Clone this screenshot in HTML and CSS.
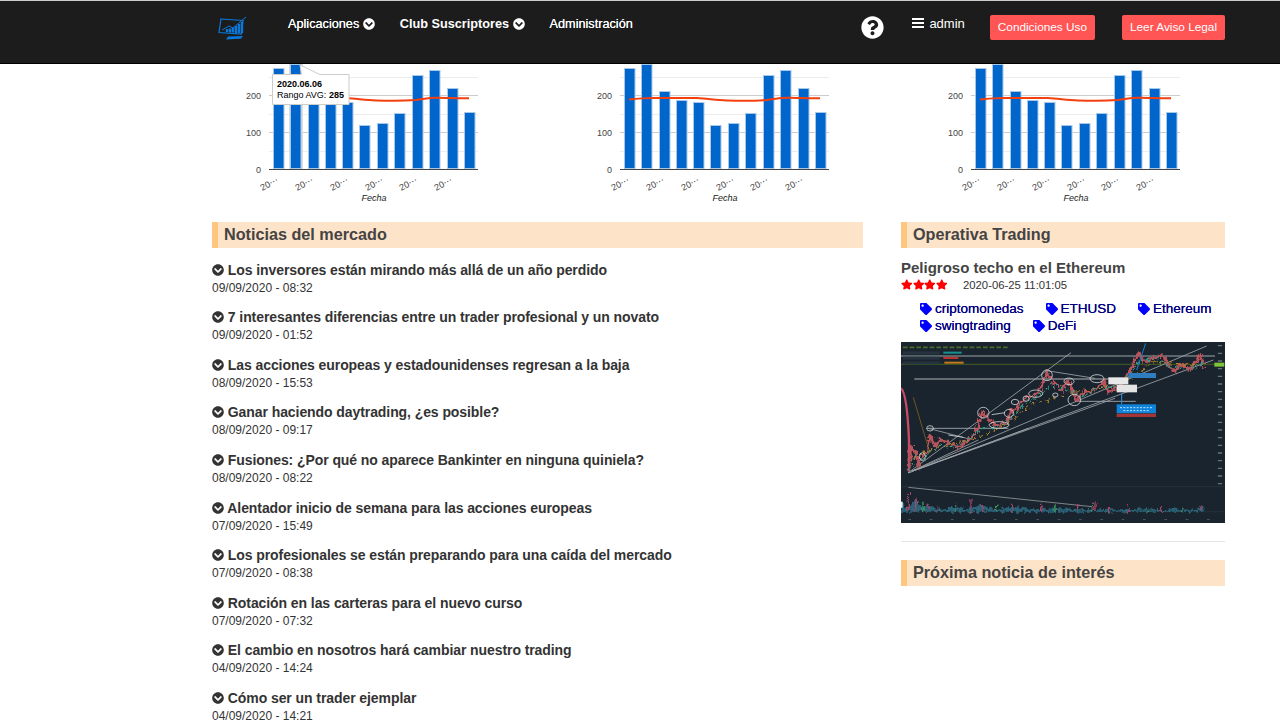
FILE: index.html
```html
<!DOCTYPE html>
<html lang="es">
<head>
  <meta charset="UTF-8">
  <title>Noticias del mercado</title>
  <link rel="stylesheet" href="styles.css">
</head>
<body>
  <svg class="icon-defs" width="0" height="0">
    <symbol id="i-chevron" viewBox="0 0 512 512"><path d="M504 256c0 137-111 248-248 248S8 393 8 256 119 8 256 8s248 111 248 248zM273 369l137-137c9-9 9-25 0-34l-17-17c-9-9-25-9-34 0L256 284 153 181c-9-9-25-9-34 0l-17 17c-9 9-9 25 0 34l137 137c9 10 25 10 34 0z"/></symbol>
    <symbol id="i-tag" viewBox="0 0 512 512"><path d="M0 252V48C0 21 21 0 48 0h204c13 0 25 5 34 14l212 212c19 19 19 49 0 68L294 498c-19 19-49 19-68 0L14 286c-9-9-14-21-14-34zm112-188c-27 0-48 21-48 48s21 48 48 48 48-21 48-48-21-48-48-48z"/></symbol>
    <symbol id="i-star" viewBox="0 0 576 512"><path d="M259 18l-65 132-146 21c-26 4-37 36-18 55l106 103-25 146c-5 26 23 46 46 34l131-69 131 69c23 12 51-8 46-34l-25-146 106-103c19-19 8-51-18-55l-146-21-65-132c-12-24-46-24-58 0z"/></symbol>
  </svg>

  <div class="header">
    <div class="header-inner">
      <svg class="logo" viewBox="0 0 30 25" fill="none" stroke="#0a78d8">
        <path d="M3 3l22 1.500-1.500 13.500-22.500-1.500z" stroke-width="1.200"/>
        <path d="M4 14l7-4 4 2 13-11" stroke-width="1"/>
        <path d="M9 16v-3M12 16.500v-4M15 16.500v-5M18 17v-7M21 17v-9M24 17v-11" stroke-width="2.400"/>
        <path d="M8 23.500l15-.8 2-2.700-15 .6z" fill="#0a78d8" stroke="none"/>
      </svg>
      <nav class="nav-links">
        <a class="nav-link">Aplicaciones <svg class="nav-chevron"><use href="#i-chevron"/></svg></a>
        <a class="nav-link nav-link-bold">Club Suscriptores <svg class="nav-chevron"><use href="#i-chevron"/></svg></a>
        <a class="nav-link">Administración</a>
      </nav>
      <div class="nav-right">
        <svg class="help-icon" viewBox="0 0 512 512"><path fill="#fff" d="M504 256c0 137-111 248-248 248S8 393 8 256 119 8 256 8s248 111 248 248zM263 90c-54 0-89 23-116 64-4 5-3 12 3 16l35 26c5 4 13 3 17-2 18-23 30-36 57-36 20 0 45 13 45 33 0 15-12 22-32 33-23 13-54 30-54 71v7c0 7 5 12 12 12h56c7 0 12-5 12-12v-2c0-29 84-30 84-108 0-58-60-102-119-102zm-7 250c-24 0-44 20-44 44s20 44 44 44 44-20 44-44-20-44-44-44z"/></svg>
        <span class="user">
          <svg class="bars-icon" viewBox="0 0 12 10"><path fill="#fff" d="M0 0h12v2H0zM0 4h12v2H0zM0 8h12v2H0z"/></svg>
          admin
        </span>
        <a class="btn-legal btn-terms">Condiciones Uso</a>
        <a class="btn-legal">Leer Aviso Legal</a>
      </div>
    </div>
  </div>

  <div class="main">
    <!-- graficos rango -->
    <div class="charts">
      <svg class="chart" viewBox="0 0 300 150">
        <path class="grid-minor" d="M57 13.500h209M57 50.500h209M57 87.500h209"/>
        <path class="grid-major" d="M57 31.500h209M57 68.500h209"/>
        <rect class="bar-halo" x="77" y="0" width="14" height="105"/>
        <g class="bars">
          <rect x="61.500" y="4.500" width="10.500" height="100"/><rect x="78.500" y="0.500" width="10.500" height="104"/><rect x="96.500" y="27.500" width="10.500" height="77"/><rect x="113.500" y="36.500" width="10.500" height="68"/><rect x="130.500" y="38.500" width="10.500" height="66"/><rect x="147.500" y="61.500" width="10.500" height="43"/><rect x="165.500" y="59.500" width="10.500" height="45"/><rect x="182.500" y="49.500" width="10.500" height="55"/><rect x="200.500" y="11.500" width="10.500" height="93"/><rect x="217.500" y="6.500" width="10.500" height="98"/><rect x="235.500" y="24.500" width="10.500" height="80"/><rect x="252.500" y="48.500" width="10.500" height="56"/>
        </g>
        <path class="avg-line" d="M66 35.500C75 34.500 80 34 90 34S125 33.800 134 34C145 34.500 152 36 164 36.400S190 37 204 36C212 35 216 33.800 224 33.700S245 34.300 257 34.300"/>
        <path class="axis" d="M57 105.500h209"/>
        <g class="y-labels"><text x="49" y="109">0</text><text x="49" y="72">100</text><text x="49" y="35">200</text></g>
        <g class="x-labels"><text transform="rotate(-28 67 118)" x="67" y="118">20⋯</text><text transform="rotate(-28 102 118)" x="102" y="118">20⋯</text><text transform="rotate(-28 137 118)" x="137" y="118">20⋯</text><text transform="rotate(-28 172 118)" x="172" y="118">20⋯</text><text transform="rotate(-28 206 118)" x="206" y="118">20⋯</text><text transform="rotate(-28 241 118)" x="241" y="118">20⋯</text></g>
        <text class="axis-title" x="162" y="137">Fecha</text>
        <!-- tooltip del grafico -->
        <path class="tip-box" d="M60.500 10.500h29L88 1l20 9.500h29v30h-76.500z"/>
        <text class="tip-date" x="65" y="23">2020.06.06</text>
        <text class="tip-text" x="65" y="34">Rango AVG: <tspan class="tip-value">285</tspan></text>
      </svg>

      <svg class="chart" viewBox="0 0 300 150">
        <path class="grid-minor" d="M57 13.500h209M57 50.500h209M57 87.500h209"/>
        <path class="grid-major" d="M57 31.500h209M57 68.500h209"/>
        <g class="bars">
          <rect x="61.500" y="4.500" width="10.500" height="100"/><rect x="78.500" y="0.500" width="10.500" height="104"/><rect x="96.500" y="27.500" width="10.500" height="77"/><rect x="113.500" y="36.500" width="10.500" height="68"/><rect x="130.500" y="38.500" width="10.500" height="66"/><rect x="147.500" y="61.500" width="10.500" height="43"/><rect x="165.500" y="59.500" width="10.500" height="45"/><rect x="182.500" y="49.500" width="10.500" height="55"/><rect x="200.500" y="11.500" width="10.500" height="93"/><rect x="217.500" y="6.500" width="10.500" height="98"/><rect x="235.500" y="24.500" width="10.500" height="80"/><rect x="252.500" y="48.500" width="10.500" height="56"/>
        </g>
        <path class="avg-line" d="M66 35.500C75 34.500 80 34 90 34S125 33.800 134 34C145 34.500 152 36 164 36.400S190 37 204 36C212 35 216 33.800 224 33.700S245 34.300 257 34.300"/>
        <path class="axis" d="M57 105.500h209"/>
        <g class="y-labels"><text x="49" y="109">0</text><text x="49" y="72">100</text><text x="49" y="35">200</text></g>
        <g class="x-labels"><text transform="rotate(-28 67 118)" x="67" y="118">20⋯</text><text transform="rotate(-28 102 118)" x="102" y="118">20⋯</text><text transform="rotate(-28 137 118)" x="137" y="118">20⋯</text><text transform="rotate(-28 172 118)" x="172" y="118">20⋯</text><text transform="rotate(-28 206 118)" x="206" y="118">20⋯</text><text transform="rotate(-28 241 118)" x="241" y="118">20⋯</text></g>
        <text class="axis-title" x="162" y="137">Fecha</text>
      </svg>

      <svg class="chart" viewBox="0 0 300 150">
        <path class="grid-minor" d="M57 13.500h209M57 50.500h209M57 87.500h209"/>
        <path class="grid-major" d="M57 31.500h209M57 68.500h209"/>
        <g class="bars">
          <rect x="61.500" y="4.500" width="10.500" height="100"/><rect x="78.500" y="0.500" width="10.500" height="104"/><rect x="96.500" y="27.500" width="10.500" height="77"/><rect x="113.500" y="36.500" width="10.500" height="68"/><rect x="130.500" y="38.500" width="10.500" height="66"/><rect x="147.500" y="61.500" width="10.500" height="43"/><rect x="165.500" y="59.500" width="10.500" height="45"/><rect x="182.500" y="49.500" width="10.500" height="55"/><rect x="200.500" y="11.500" width="10.500" height="93"/><rect x="217.500" y="6.500" width="10.500" height="98"/><rect x="235.500" y="24.500" width="10.500" height="80"/><rect x="252.500" y="48.500" width="10.500" height="56"/>
        </g>
        <path class="avg-line" d="M66 35.500C75 34.500 80 34 90 34S125 33.800 134 34C145 34.500 152 36 164 36.400S190 37 204 36C212 35 216 33.800 224 33.700S245 34.300 257 34.300"/>
        <path class="axis" d="M57 105.500h209"/>
        <g class="y-labels"><text x="49" y="109">0</text><text x="49" y="72">100</text><text x="49" y="35">200</text></g>
        <g class="x-labels"><text transform="rotate(-28 67 118)" x="67" y="118">20⋯</text><text transform="rotate(-28 102 118)" x="102" y="118">20⋯</text><text transform="rotate(-28 137 118)" x="137" y="118">20⋯</text><text transform="rotate(-28 172 118)" x="172" y="118">20⋯</text><text transform="rotate(-28 206 118)" x="206" y="118">20⋯</text><text transform="rotate(-28 241 118)" x="241" y="118">20⋯</text></g>
        <text class="axis-title" x="162" y="137">Fecha</text>
      </svg>
    </div>

    <div class="columns">
      <!-- noticias -->
      <section class="news">
        <h2 class="section-title">Noticias del mercado</h2>
        <div class="news-list">
          <div class="news-item"><div class="news-title"><svg class="news-icon"><use href="#i-chevron"/></svg> Los inversores están mirando más allá de un año perdido</div><div class="news-date">09/09/2020 - 08:32</div></div>
          <div class="news-item"><div class="news-title"><svg class="news-icon"><use href="#i-chevron"/></svg> 7 interesantes diferencias entre un trader profesional y un novato</div><div class="news-date">09/09/2020 - 01:52</div></div>
          <div class="news-item"><div class="news-title"><svg class="news-icon"><use href="#i-chevron"/></svg> Las acciones europeas y estadounidenses regresan a la baja</div><div class="news-date">08/09/2020 - 15:53</div></div>
          <div class="news-item"><div class="news-title"><svg class="news-icon"><use href="#i-chevron"/></svg> Ganar haciendo daytrading, ¿es posible?</div><div class="news-date">08/09/2020 - 09:17</div></div>
          <div class="news-item"><div class="news-title"><svg class="news-icon"><use href="#i-chevron"/></svg> Fusiones: ¿Por qué no aparece Bankinter en ninguna quiniela?</div><div class="news-date">08/09/2020 - 08:22</div></div>
          <div class="news-item"><div class="news-title"><svg class="news-icon"><use href="#i-chevron"/></svg> Alentador inicio de semana para las acciones europeas</div><div class="news-date">07/09/2020 - 15:49</div></div>
          <div class="news-item"><div class="news-title"><svg class="news-icon"><use href="#i-chevron"/></svg> Los profesionales se están preparando para una caída del mercado</div><div class="news-date">07/09/2020 - 08:38</div></div>
          <div class="news-item"><div class="news-title"><svg class="news-icon"><use href="#i-chevron"/></svg> Rotación en las carteras para el nuevo curso</div><div class="news-date">07/09/2020 - 07:32</div></div>
          <div class="news-item"><div class="news-title"><svg class="news-icon"><use href="#i-chevron"/></svg> El cambio en nosotros hará cambiar nuestro trading</div><div class="news-date">04/09/2020 - 14:24</div></div>
          <div class="news-item"><div class="news-title"><svg class="news-icon"><use href="#i-chevron"/></svg> Cómo ser un trader ejemplar</div><div class="news-date">04/09/2020 - 14:21</div></div>
        </div>
      </section>

      <!-- operativa -->
      <aside class="side">
        <h2 class="section-title">Operativa Trading</h2>
        <h3 class="post-title">Peligroso techo en el Ethereum</h3>
        <div class="post-meta">
          <span class="stars">
            <svg class="star"><use href="#i-star"/></svg><svg class="star"><use href="#i-star"/></svg><svg class="star"><use href="#i-star"/></svg><svg class="star"><use href="#i-star"/></svg>
          </span>
          <span class="post-date">2020-06-25 11:01:05</span>
        </div>
        <div class="tags">
          <a class="tag"><svg class="tag-icon"><use href="#i-tag"/></svg>criptomonedas</a>
          <a class="tag"><svg class="tag-icon"><use href="#i-tag"/></svg>ETHUSD</a>
          <a class="tag"><svg class="tag-icon"><use href="#i-tag"/></svg>Ethereum</a>
          <a class="tag"><svg class="tag-icon"><use href="#i-tag"/></svg>swingtrading</a>
          <a class="tag"><svg class="tag-icon"><use href="#i-tag"/></svg>DeFi</a>
        </div>

        <svg class="trade-chart" viewBox="18 6 972 543">
          <defs>
            <filter id="soft" x="0" y="0" width="100%" height="100%"><feGaussianBlur stdDeviation="1.900"/></filter>
            <filter id="candles" filterUnits="userSpaceOnUse" x="18" y="6" width="972" height="543">
              <feTurbulence type="fractalNoise" baseFrequency=".11 .07" numOctaves="2" seed="4"/>
              <feDisplacementMap in="SourceGraphic" scale="24" xChannelSelector="R" yChannelSelector="G"/>
              <feGaussianBlur stdDeviation="2"/>
            </filter>
          </defs>
          <rect x="18" y="6" width="972" height="543" fill="#19242e"/>
          <g filter="url(#soft)" fill="none">
            <path d="M18 48H960" stroke="#9ea5a9" stroke-width="3"/>
            <path d="M18 73H960" stroke="#3a5223" stroke-width="4"/>
            <path d="M58 117H640" stroke="#7d8488" stroke-width="5"/>
            <path d="M95 265H340M540 184H722" stroke="#9299a0" stroke-width="3"/>
            <path d="M18 440H990M18 515H990" stroke="#2c3640" stroke-width="2"/>
            <path d="M40 398L528 38M40 398L935 18M40 398L955 60M40 398L660 175M40 398L400 265M40 398L250 300M100 265L215 295M455 92L600 115" stroke="#9fa5a9" stroke-width="2.500"/>
            <path d="M40 442L590 500" stroke="#7d8488" stroke-width="3"/>
            <path d="M55 172L105 340" stroke="#a16c1a" stroke-width="2"/>
            <path d="M975 15V435" stroke="#68727a" stroke-width="13" stroke-dasharray="4 19"/>
            <path d="M40 540H950" stroke="#5a646c" stroke-width="5" stroke-dasharray="8 56"/>
            <path d="M24 22H340" stroke="#4a6b2a" stroke-width="5" stroke-dasharray="14 6"/>
            <path d="M18 145C32 155 38 210 42 300V395" stroke="#c84b66" stroke-width="7"/>
          </g>
          <g filter="url(#candles)" fill="none">
            <path d="M42 390L48 320 60 335 72 375 85 345 98 330 105 285 120 320 135 300 165 310 190 325 215 305 235 285 250 260 262 215 280 240 300 255 335 250 345 215 365 205 380 185 400 170 430 160 445 125 455 95 475 125 500 150 520 125 545 180 570 155 600 150 625 125 640 155 680 135 700 100 715 70 730 35 745 65 775 55 800 45 820 75 840 95 860 70 885 90 915 45 925 85" stroke="#b9535c" stroke-width="8"/>
            <path d="M42 392L60 345 85 360 110 330 140 315 180 322 215 300 250 270 275 262 330 255 360 222 395 185 435 165 470 135 510 145 560 170 610 145 665 140 700 110 735 60 790 55 830 80 880 88 925 70" stroke="#3a9a86" stroke-width="4" stroke-dasharray="9 7"/>
            <path d="M55 350L130 320 230 298 330 255 420 190 520 160 620 145 700 115 780 65 900 75" stroke="#b98a2c" stroke-width="3" stroke-dasharray="14 9"/>
            <path d="M18 515V490L40 505 60 475 80 505 100 495 130 508 170 500 220 508 260 495 300 508 350 500 420 508 500 505 600 510 700 507 800 510 900 508 925 500V515z" fill="#2a6478"/>
            <path d="M40 515V458M62 515V470M100 515V490M130 515V498M228 515V480M262 515V492M350 515V494M440 515V488M548 515V495M600 515V486M640 515V498M700 515V500M800 515V498M915 515V498" stroke="#a8456a" stroke-width="4"/>
            <path d="M84 515V488M180 515V494M305 515V496M480 515V498M590 515V490M760 515V500M860 515V502" stroke="#3f9f5c" stroke-width="4"/>
          </g>
          <g filter="url(#soft)">
            <path d="M725 90L752 10" stroke="#1f7fd0" stroke-width="3"/>
            <path d="M680 160V192" stroke="#2a95e6" stroke-width="3"/>
            <g fill="none" stroke="#cfd3d5" stroke-width="2.500">
              <ellipse cx="265" cy="218" rx="17" ry="16"/>
              <ellipse cx="82" cy="350" rx="9" ry="12"/>
              <ellipse cx="105" cy="265" rx="10" ry="8"/>
              <ellipse cx="312" cy="255" rx="30" ry="10"/>
              <ellipse cx="342" cy="220" rx="14" ry="12"/>
              <ellipse cx="360" cy="186" rx="11" ry="8"/>
              <ellipse cx="393" cy="176" rx="9" ry="8"/>
              <ellipse cx="422" cy="161" rx="21" ry="11"/>
              <ellipse cx="456" cy="106" rx="16" ry="16"/>
              <ellipse cx="481" cy="165" rx="8" ry="6"/>
              <ellipse cx="522" cy="124" rx="15" ry="10"/>
              <ellipse cx="538" cy="180" rx="19" ry="17"/>
              <ellipse cx="606" cy="116" rx="21" ry="12"/>
              <path d="M160 285L205 292M290 224L330 218"/>
            </g>
            <rect x="640" y="112" width="60" height="21" fill="#e8e8e8"/>
            <rect x="665" y="134" width="61" height="23" fill="#e4e4e4"/>
            <rect x="700" y="99" width="83" height="15" fill="#2f7dc0"/>
            <rect x="665" y="193" width="118" height="27" fill="#0b83dc"/>
            <path d="M675 203H775M685 212H765" stroke="#bfe0f7" stroke-width="3" stroke-dasharray="6 4"/>
            <rect x="665" y="221" width="118" height="10" fill="#a53535"/>
            <rect x="958" y="68" width="30" height="12" fill="#7ec13a"/>
            <rect x="24" y="34" width="110" height="9" fill="#26323c"/>
            <rect x="24" y="50" width="110" height="9" fill="#26323c"/>
            <rect x="24" y="64" width="110" height="9" fill="#26323c"/>
            <rect x="145" y="35" width="55" height="6" fill="#12908f"/>
            <rect x="145" y="51" width="45" height="6" fill="#b8322f"/>
            <rect x="148" y="65" width="58" height="6" fill="#c47a1b"/>
            <rect x="18" y="485" width="5" height="18" fill="#f2f2f2"/>
          </g>
        </svg>

        <hr class="side-rule">
        <h2 class="section-title">Próxima noticia de interés</h2>
      </aside>
    </div>
  </div>
</body>
</html>
```

FILE: styles.css
```css
html, body {
  height: 100%;
}
body {
  margin: 0;
  font-family: "Liberation Sans", Arial, sans-serif;
  background: #fff;
  color: #333;
  overflow: hidden;
}
.icon-defs {
  position: absolute;
}

/* cabecera */
.header {
  height: 64px;
  box-sizing: border-box;
  background-color: #1c1c1c;
  border-top: 1px solid #ccc;
  border-bottom: 1px solid #000;
  position: relative;
  z-index: 2;
}
.header-inner {
  display: flex;
  margin-left: 212px;
  width: 1013px;
}
.logo {
  width: 30px;
  height: 25px;
  margin: 15px 0 0 6px;
}
.nav-links {
  display: flex;
  gap: 25px;
  margin: 15px 0 0 40px;
}
.nav-link {
  color: #fff;
  font-size: 12.700px;
  line-height: 16px;
  text-shadow: 0 0 .5px #fff;
}
.nav-link-bold {
  font-weight: bold;
  text-shadow: none;
}
.nav-chevron {
  width: 12px;
  height: 12px;
  fill: #fff;
  vertical-align: -2px;
}
.nav-right {
  display: flex;
  margin-left: auto;
  align-items: flex-start;
}
.help-icon {
  width: 23px;
  height: 23px;
  margin-top: 15px;
}
.user {
  margin: 15px 25px 0 28px;
  color: #fff;
  font-size: 13px;
  line-height: 16px;
}
.bars-icon {
  width: 12px;
  height: 10px;
  margin-right: 2px;
}
.btn-legal {
  margin-top: 14px;
  padding: 0 8px;
  background-color: #f55;
  border-radius: 2px;
  color: #fff;
  font-size: 11.800px;
  line-height: 25px;
}
.btn-terms {
  margin-right: 27px;
}

.main {
  margin-left: 212px;
  width: 1013px;
}

/* graficos */
.charts {
  display: flex;
  gap: 51px;
  height: 158px;
}
.chart {
  width: 300px;
  height: 150px;
  flex: none;
  font-family: "Liberation Sans", Arial, sans-serif;
}
.grid-minor {
  stroke: #ececec;
  fill: none;
}
.grid-major {
  stroke: #ccc;
  fill: none;
}
.bars rect {
  fill: #0066cc;
  stroke: #a8c8ea;
  stroke-width: 1;
}
.bar-halo {
  fill: #ddd;
}
.avg-line {
  fill: none;
  stroke: #f4400f;
  stroke-width: 2;
}
.axis {
  stroke: #444;
  fill: none;
}
.y-labels text {
  font-size: 9px;
  fill: #444;
  text-anchor: end;
}
.x-labels text {
  font-size: 9px;
  fill: #444;
  text-anchor: end;
}
.axis-title {
  font-size: 9px;
  font-style: italic;
  fill: #222;
  text-anchor: middle;
}
.tip-box {
  fill: #fff;
  stroke: #ccc;
}
.tip-date {
  font-size: 9px;
  font-weight: bold;
  fill: #000;
}
.tip-text {
  font-size: 9px;
  fill: #000;
}
.tip-value {
  font-weight: bold;
}

/* columnas */
.columns {
  display: grid;
  grid-template-columns: 651px 324px;
  gap: 38px;
}
.section-title {
  margin: 0;
  padding-left: 6px;
  height: 26px;
  background-color: #fde3c8;
  border-left: 6px solid #ffc680;
  color: #444;
  font-size: 16.200px;
  line-height: 25px;
  font-weight: bold;
}
.news-list {
  margin-top: 13.700px;
}
.news-item {
  height: 47.600px;
}
.news-title {
  font-size: 14px;
  line-height: 17px;
  font-weight: bold;
  letter-spacing: -.08px;
}
.news-icon {
  width: 12px;
  height: 12px;
  fill: #333;
  vertical-align: -1px;
}
.news-date {
  margin-top: 2px;
  font-size: 12px;
  line-height: 14px;
}

/* operativa */
.post-title {
  margin: 11px 0 0;
  color: #444;
  font-size: 15px;
  line-height: 17px;
  font-weight: bold;
}
.post-meta {
  display: flex;
  align-items: center;
  gap: 16px;
  height: 17px;
}
.stars {
  display: flex;
  line-height: 0;
}
.star {
  width: 11.500px;
  height: 11px;
  fill: #f00;
}
.post-date {
  font-size: 11.300px;
}
.tags {
  display: flex;
  flex-wrap: wrap;
  gap: 0 22px;
  margin: 7px 0 0 19px;
}
.tag {
  display: flex;
  align-items: center;
  gap: 3px;
  color: #000080;
  font-size: 13.500px;
  line-height: 17px;
  text-shadow: 0 0 .6px #000080;
}
.tag-icon {
  width: 12px;
  height: 12px;
  fill: #0000ff;
}
.trade-chart {
  display: block;
  width: 324px;
  height: 181px;
  margin-top: 8px;
}
.side-rule {
  margin: 18px 0 18px;
  border: 0;
  border-top: 1px solid #e5e5e5;
}
```
